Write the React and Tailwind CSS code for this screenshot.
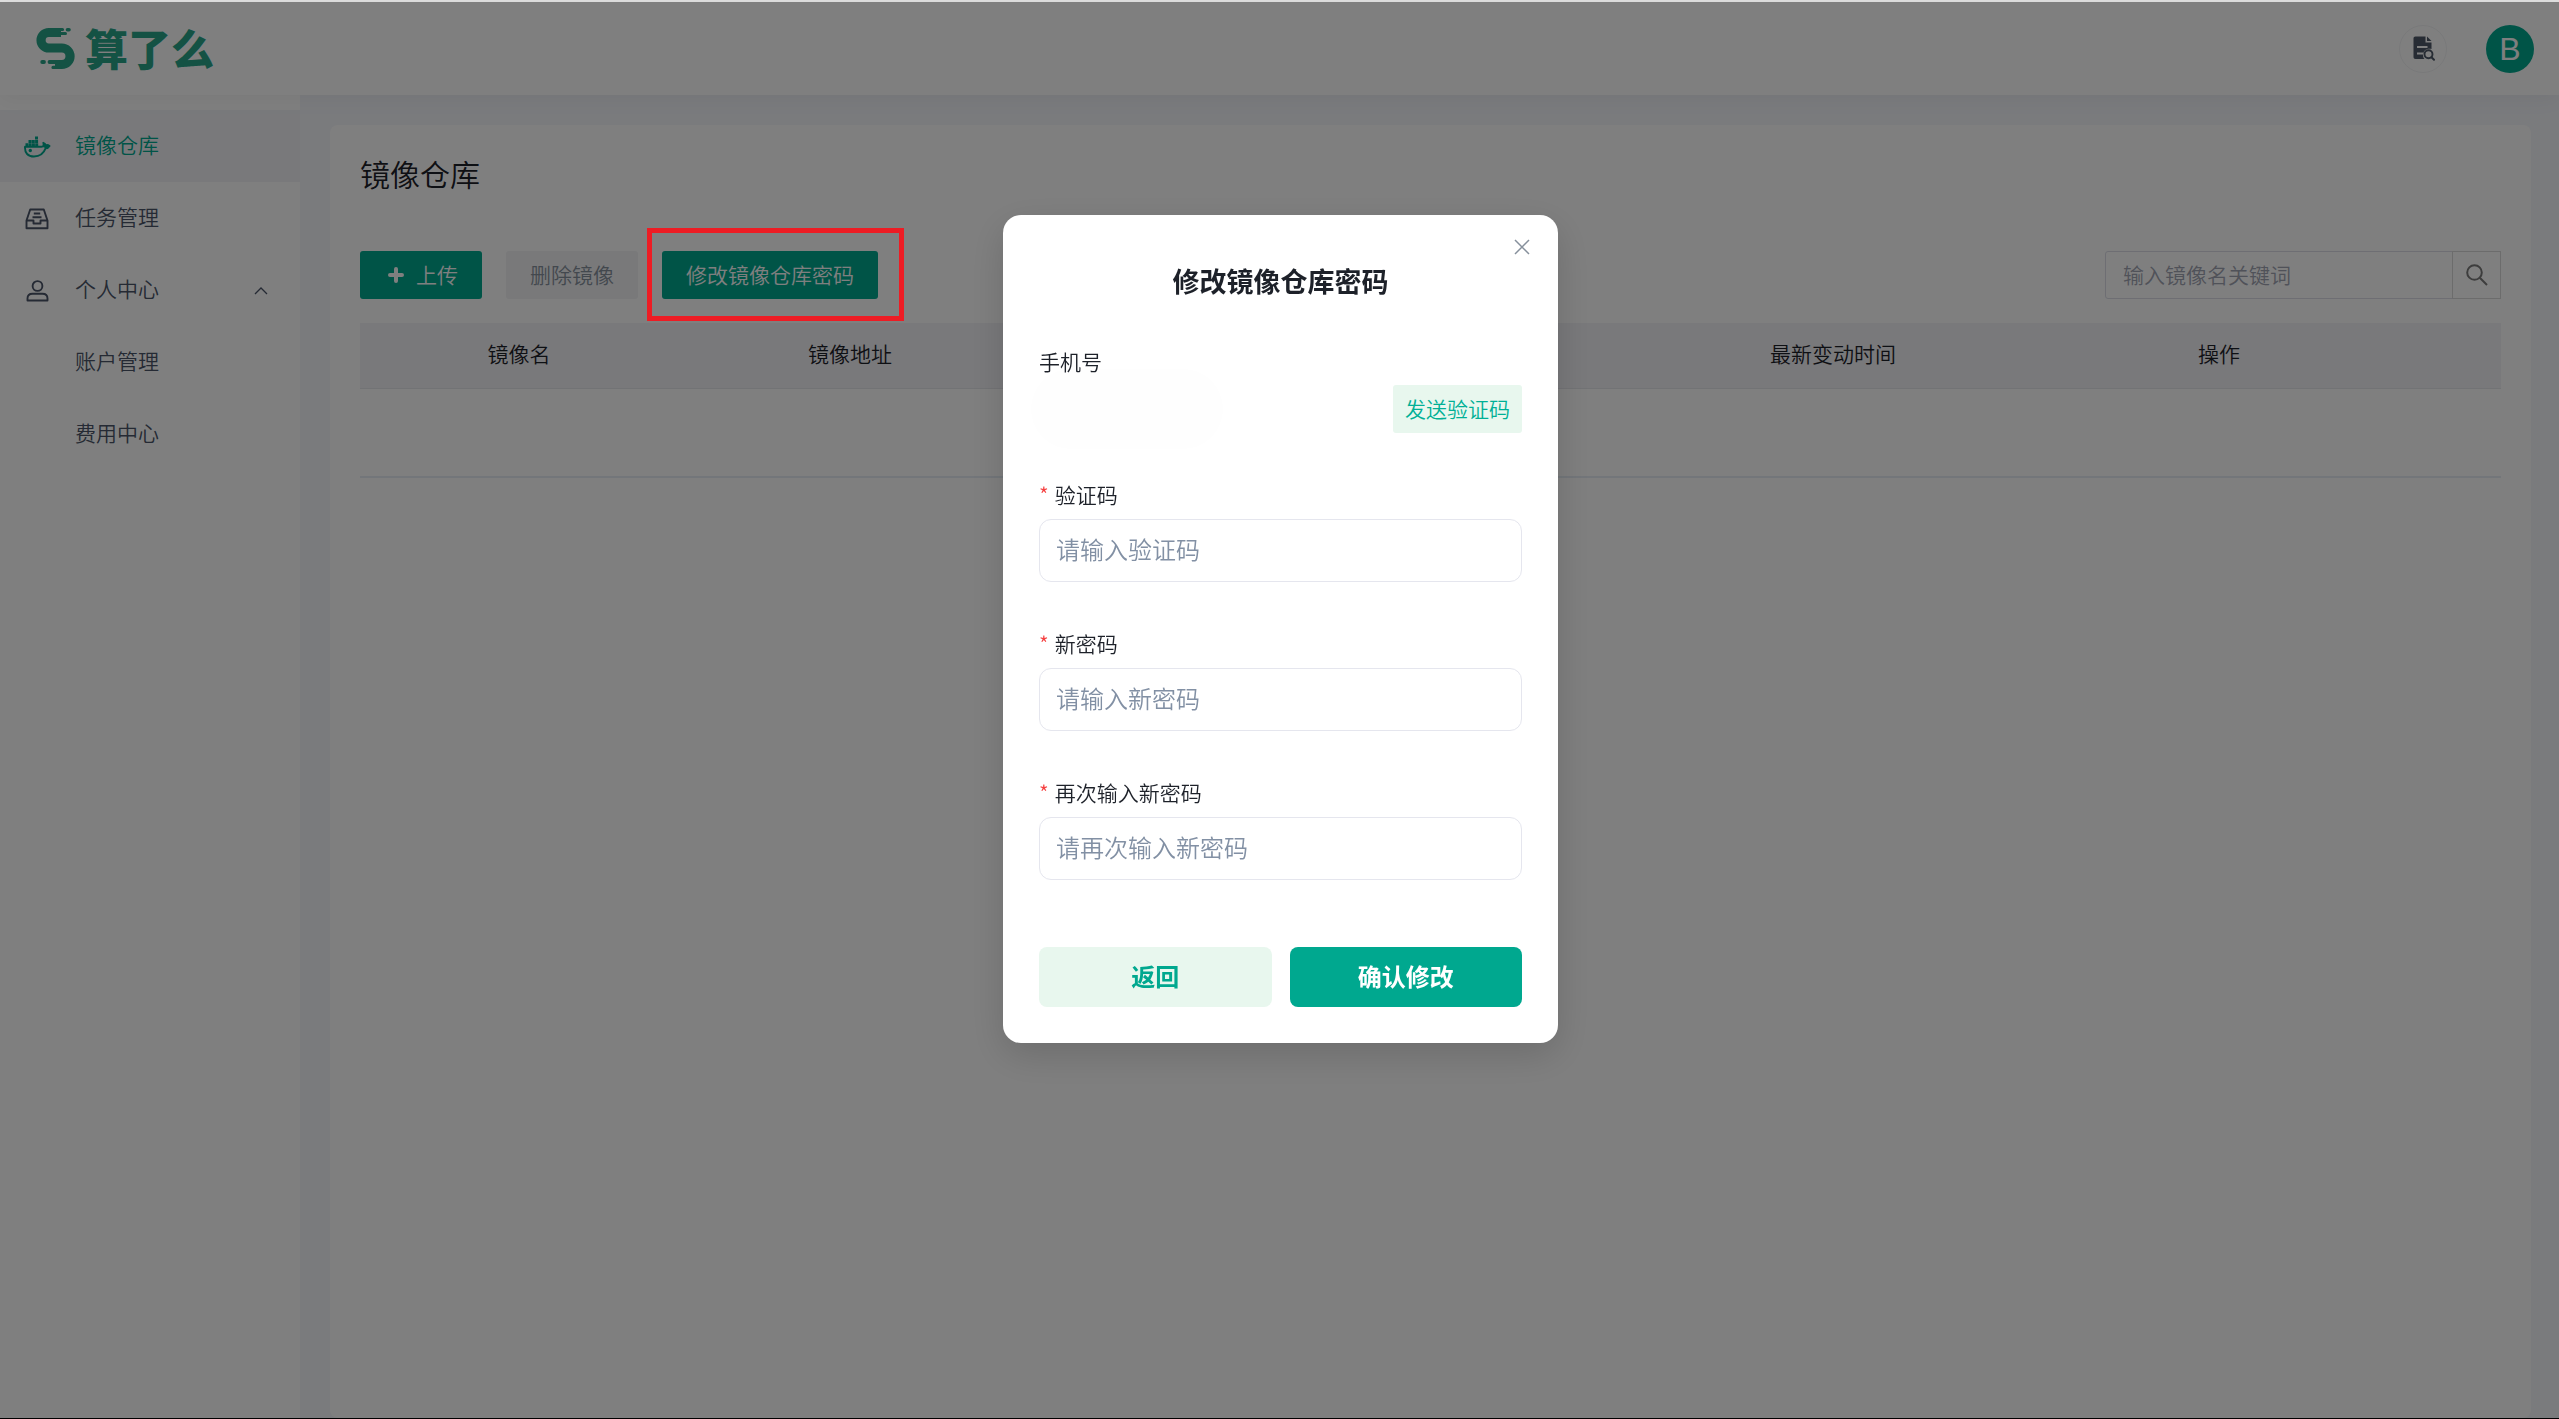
import React from "react";

function LogoMark() {
  return (
    <svg width="39" height="43" viewBox="0 0 39 43" fill="none" aria-hidden="true">
      <path d="M25 5.500H12.800A7.700 7.700 0 0 0 12.800 21H25.800A8.200 8.200 0 0 1 25.800 37.500H19" stroke="currentColor" strokeWidth="9.200" />
      <path d="M14 2.500H26.500M17 40.400H24" stroke="currentColor" strokeWidth="3.200" strokeLinecap="round" />
      <path d="M31.500 2.800H33" stroke="currentColor" strokeWidth="3.600" strokeLinecap="round" />
      <path d="M24 6.600H29.500" stroke="currentColor" strokeWidth="3" strokeLinecap="round" />
      <path d="M6.200 35H8" stroke="currentColor" strokeWidth="3.800" strokeLinecap="round" />
      <path d="M13.500 35H22" stroke="currentColor" strokeWidth="3.800" strokeLinecap="round" />
    </svg>
  );
}

function DockerIcon() {
  return (
    <svg width="27" height="22" viewBox="0 0 27 22" fill="none" aria-hidden="true">
      <path d="M11 0.500H14V3.500H11zM4.500 4H7.500V7H4.500zM7.800 4H10.800V7H7.800zM11.100 4H14.100V7H11.100zM1.500 7.300H4.300V10.300H1.500zM4.600 7.300H7.600V10.300H4.600zM7.900 7.300H10.900V10.300H7.900zM11.200 7.300H14.200V10.300H11.200z" fill="currentColor" />
      <path d="M1 10.800H17.500C19.500 10.800 20 9 19.300 6.800C21 7.400 21.500 8.300 21.600 9.400C23 8.800 24.500 9.200 25.500 10C24.700 11.500 23.500 12.200 21.700 12.200C19.500 18 15.500 20.500 10 20.500C4 20.500 0.600 17 1 10.800Z" stroke="currentColor" strokeWidth="1.900" strokeLinejoin="round" />
      <path d="M19.300 6.800C21 7.400 21.500 8.300 21.600 9.400C23 8.800 24.500 9.200 25.500 10C24.700 11.500 23.500 12.200 21.700 12.200L18.500 10.800C19.500 10 19.700 8.500 19.300 6.800Z" fill="currentColor" />
      <circle cx="6.300" cy="14.500" r="1.700" fill="currentColor" />
    </svg>
  );
}

function InboxIcon() {
  return (
    <svg width="26" height="22" viewBox="-1 0 26 22" fill="none" stroke="currentColor" strokeWidth="1.900" strokeLinejoin="round" aria-hidden="true">
      <path d="M1.500 12.500L5.200 1.500H18.800L22.500 12.500V20.200H1.500Z" />
      <path d="M1.500 12.500H8.500V15.500H15.500V12.500H22.500" />
      <path d="M8.800 5.500H15.200M7.500 9.200H16.500" />
    </svg>
  );
}

function UserIcon() {
  return (
    <svg width="26" height="22" viewBox="-1 0 26 22" fill="none" stroke="currentColor" strokeWidth="1.900" strokeLinejoin="round" aria-hidden="true">
      <circle cx="12.500" cy="6" r="4.900" />
      <path d="M2.500 20.500V18.500C2.500 15.500 4.500 13.800 7.500 13.800H17.500C20.500 13.800 22.500 15.500 22.500 18.500V20.500Z" />
    </svg>
  );
}

function FileSearchIcon() {
  return (
    <svg width="22" height="25" viewBox="0 0 22 25" fill="none" aria-hidden="true">
      <path d="M2.500 0.500H12.500V6.500H18.500V13C13.500 12 10 15 10 19C10 20.800 10.500 22 11.500 23H2.500C1.200 23 0.500 22.200 0.500 21V2.500C0.500 1.200 1.200 0.500 2.500 0.500Z" fill="currentColor" />
      <path d="M14 0.500L18.500 5H14Z" fill="currentColor" />
      <path d="M4 11H14.500M4 17.500H10" stroke="white" strokeWidth="2.200" />
      <circle cx="15.500" cy="18.200" r="4" fill="white" stroke="currentColor" strokeWidth="1.900" />
      <path d="M18.500 21.200L21 23.800" stroke="currentColor" strokeWidth="2" strokeLinecap="round" />
    </svg>
  );
}

const menu = [
  { label: "镜像仓库", icon: <DockerIcon />, active: true },
  { label: "任务管理", icon: <InboxIcon /> },
  { label: "个人中心", icon: <UserIcon />, open: true },
  { label: "账户管理" },
  { label: "费用中心" },
];

const columns = [
  { label: "镜像名", width: "w-[318px]" },
  { label: "镜像地址", width: "w-[344px]" },
  { label: "", width: "" },
  { label: "最新变动时间", width: "w-[208px]" },
  { label: "操作", width: "w-[564px]" },
];

const fields = [
  { id: "code", label: "验证码", hint: "请输入验证码", type: "text" },
  { id: "password", label: "新密码", hint: "请输入新密码", type: "password" },
  { id: "confirm", label: "再次输入新密码", hint: "请再次输入新密码", type: "password" },
];

function Header() {
  return (
    <header className="relative z-10 flex h-[93px] shrink-0 items-center justify-between bg-white pl-9 pr-[25px] shadow-[0_4px_20px_rgba(0,0,0,0.05)]">
      <a href="#" className="flex items-center gap-[10px] text-[#28a488]">
        <LogoMark />
        <span className="pb-1 text-[43px] leading-[48px] font-black">算了么</span>
      </a>
      <div className="flex items-center gap-[39px]">
        <button type="button" aria-label="文档" className="flex size-12 items-center justify-center rounded-full border border-[#f2f3f5] pl-0.5 text-[#4e5969]">
          <FileSearchIcon />
        </button>
        <button type="button" className="size-12 rounded-full bg-[#00a88f] font-['Liberation_Sans'] text-[32px] leading-[48px] text-white">B</button>
      </div>
    </header>
  );
}

function Sidebar() {
  return (
    <nav className="w-[300px] shrink-0 bg-white pt-[15px]">
      <ul>
        {menu.map((m) => (
          <li key={m.label}>
            <a href="#" className={m.active ? "flex h-[72px] items-center bg-[#f2f3f7] px-6 text-[#00a88f]" : "flex h-[72px] items-center px-6 text-[#4a5468]"}>
              <span className="flex w-[51px] shrink-0 pt-0.5">{m.icon}</span>
              <span className="flex-1 pb-1 text-[21px] leading-8">{m.label}</span>
              {m.open && (
                <svg width="14" height="9" viewBox="0 0 14 9" fill="none" stroke="currentColor" strokeWidth="1.300" className="mr-2" aria-hidden="true">
                  <path d="M1 8L7 2L13 8" />
                </svg>
              )}
            </a>
          </li>
        ))}
      </ul>
    </nav>
  );
}

function Repository() {
  return (
    <main className="mt-[30px] mr-7 ml-[30px] flex-1 rounded-lg bg-white px-[30px] pt-[26px]">
      <h1 className="text-[30px] leading-[44px] text-[#1d2129]">镜像仓库</h1>
      <div className="mt-14 flex items-center justify-between">
        <div className="flex gap-6 text-[21px] leading-8">
          <button type="button" className="flex h-12 items-center gap-2 rounded-[3px] bg-[#00a88f] px-6 pb-0.5 text-white">
            <svg width="24" height="24" viewBox="0 0 24 24" fill="none" stroke="currentColor" strokeWidth="4" strokeLinecap="round" aria-hidden="true">
              <path d="M12 7V19M6 13H18" />
            </svg>
            上传
          </button>
          <button type="button" disabled className="h-12 rounded-[3px] bg-[#f2f3f5] px-6 pb-0.5 text-[#86909c]">删除镜像</button>
          <div className="relative">
            <button type="button" className="h-12 rounded-[3px] bg-[#00a88f] px-6 pb-0.5 text-white">修改镜像仓库密码</button>
            <div className="pointer-events-none absolute -top-[23px] -right-[26px] -bottom-[22px] -left-[15px] z-50 border-[5px] border-[#ed1c24]" />
          </div>
        </div>
        <form className="flex w-[396px]">
          <input aria-label="输入镜像名关键词" placeholder="输入镜像名关键词" className="h-12 min-w-0 flex-1 rounded-l-[3px] border border-[#dcdde6] px-[17px] pb-0.5 text-[21px] outline-none placeholder:text-[#a0a4b2]" />
          <button type="button" aria-label="搜索" className="-ml-px flex h-12 w-[49px] items-center justify-center border border-[#d9d9d9] text-[#7b7b7b]">
            <svg width="22" height="22" viewBox="0 0 22 22" fill="none" stroke="currentColor" strokeWidth="2" aria-hidden="true">
              <circle cx="8.500" cy="8.500" r="7.300" />
              <path d="M13.800 13.800L21 21" />
            </svg>
          </button>
        </form>
      </div>
      <table className="mt-6 w-full table-fixed border-collapse text-[21px] leading-8 text-[#1d2129]">
        <thead className="bg-[#f2f3f7]">
          <tr>
            {columns.map((c, i) => (
              <th key={i} scope="col" className={`${c.width} h-[65px] border-b border-[#e5e6eb] pb-1 font-[350]`}>{c.label}</th>
            ))}
          </tr>
        </thead>
        <tbody>
          <tr>
            <td colSpan={5} className="h-[89px] border-b-2 border-[#e6edf4]" />
          </tr>
        </tbody>
      </table>
    </main>
  );
}

function PasswordDialog() {
  return (
    <div className="fixed inset-x-0 top-0.5 bottom-px z-40 flex items-start justify-center bg-black/50 pt-[213px] pl-0.5">
      <form role="dialog" aria-labelledby="dialog-title" className="relative w-[555px] rounded-[18px] bg-white p-9 text-[21px] leading-8 text-[#1d2129] shadow-[0_12px_36px_rgba(0,0,0,0.15)]">
        <button type="button" aria-label="关闭" className="absolute top-5 right-6 flex size-6 items-center justify-center text-[#86909c]">
          <svg width="16" height="16" viewBox="0 0 16 16" fill="none" stroke="currentColor" strokeWidth="1.500" aria-hidden="true">
            <path d="M1 1L15 15M15 1L1 15" />
          </svg>
        </button>
        <h2 id="dialog-title" className="mt-2.5 text-center text-[27px] leading-10 font-bold">修改镜像仓库密码</h2>
        <div className="mt-10">
          <p className="relative z-10 leading-10">手机号</p>
          <div className="relative mt-1 flex justify-end">
            <span className="absolute -top-4 -left-2 h-20 w-48 rounded-full bg-[#fefefe]" />
            <button type="button" className="h-12 rounded-[3px] bg-[#e8f7ee] px-3 pb-0.5 text-[#00b096]">发送验证码</button>
          </div>
        </div>
        {fields.map((f) => (
          <div key={f.id} className="mt-[45px]">
            <label htmlFor={f.id} className="mb-[9px] flex h-8 items-center gap-1.5">
              <span className="text-[#f53f3f]" aria-hidden="true">*</span>
              {f.label}
            </label>
            <input id={f.id} type={f.type} placeholder={f.hint} className="block h-[63px] w-full rounded-xl border border-[#e5e6ee] px-4 pb-1 text-[24px] outline-none placeholder:text-[#8290a4]" />
          </div>
        ))}
        <div className="mt-[67px] grid grid-cols-2 gap-[18px] text-[24px] font-bold">
          <button type="button" className="h-[60px] rounded-lg bg-[#e8f7ee] pb-0.5 text-[#00a88f]">返回</button>
          <button type="submit" className="h-[60px] rounded-lg bg-[#00a88f] pb-0.5 text-white">确认修改</button>
        </div>
      </form>
    </div>
  );
}

export default function App() {
  return (
    <div className="flex min-h-screen flex-col border-t-2 border-b border-t-[#dfdfdf] border-b-black bg-[#f4f6fb] font-['Noto_Sans_CJK_SC',sans-serif] font-[350]">
      <Header />
      <div className="flex flex-1">
        <Sidebar />
        <Repository />
      </div>
      <PasswordDialog />
    </div>
  );
}
